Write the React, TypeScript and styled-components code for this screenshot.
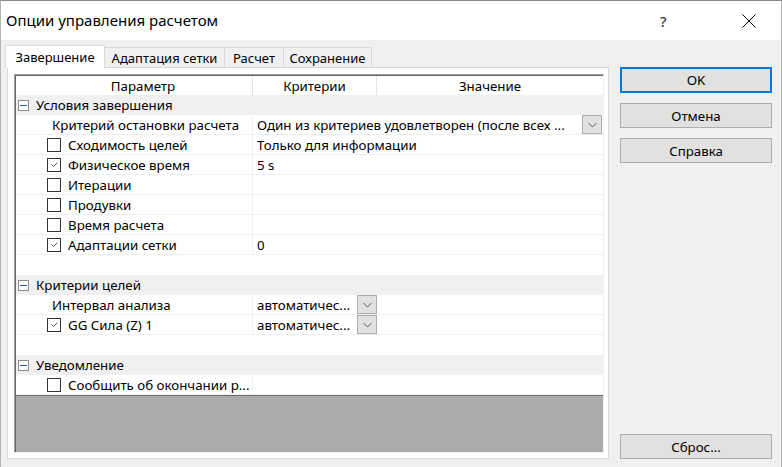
import React from "react";
import styled, { createGlobalStyle } from "styled-components";

const GlobalStyle = createGlobalStyle`
  html, body {
    margin: 0;
    padding: 0;
    background: #f0f0f0;
  }
  * {
    box-sizing: border-box;
  }
`;

const gridFont = `"Noto Sans", "Open Sans", sans-serif`;
const uiFont = `"Noto Sans", "Open Sans", sans-serif`;

type Row =
  | { kind: "group"; label: string }
  | { kind: "empty" }
  | {
      kind: "item";
      label: string;
      check?: boolean;
      checked?: boolean;
      value?: string;
      wideDrop?: boolean;
      shortDrop?: boolean;
    };

const rows: Row[] = [
  { kind: "group", label: "Условия завершения" },
  {
    kind: "item",
    label: "Критерий остановки расчета",
    value: "Один из критериев удовлетворен (после всех ...",
    wideDrop: true,
  },
  { kind: "item", label: "Сходимость целей", check: true, value: "Только для информации" },
  { kind: "item", label: "Физическое время", check: true, checked: true, value: "5 s" },
  { kind: "item", label: "Итерации", check: true },
  { kind: "item", label: "Продувки", check: true },
  { kind: "item", label: "Время расчета", check: true },
  { kind: "item", label: "Адаптации сетки", check: true, checked: true, value: "0" },
  { kind: "empty" },
  { kind: "group", label: "Критерии целей" },
  { kind: "item", label: "Интервал анализа", value: "автоматичес...", shortDrop: true },
  { kind: "item", label: "GG Сила (Z) 1", check: true, checked: true, value: "автоматичес...", shortDrop: true },
  { kind: "empty" },
  { kind: "group", label: "Уведомление" },
  { kind: "item", label: "Сообщить об окончании р...", check: true },
];

const tabs = [
  { label: "Завершение", width: 100 },
  { label: "Адаптация сетки", width: 121 },
  { label: "Расчет", width: 60 },
  { label: "Сохранение", width: 89 },
];

export default function App() {
  return (
    <>
      <GlobalStyle />
      <Window>
        <TitleBar>
          <TitleText>Опции управления расчетом</TitleText>
          <HelpMark>?</HelpMark>
          <CloseIcon width="16" height="16" viewBox="0 0 16 16">
            <path d="M1.5 1.5 L14.5 14.5 M14.5 1.5 L1.5 14.5" stroke="#000" strokeWidth="1" fill="none" />
          </CloseIcon>
        </TitleBar>
        <Body>
          <LeftColumn>
            <TabStrip>
              {tabs.map((t, i) => (
                <Tab key={t.label} $active={i === 0} $width={t.width}>
                  {t.label}
                </Tab>
              ))}
            </TabStrip>
            <Panel>
              <Grid>
                <HeaderRow>
                  <HeaderCell $width={237} $shift={18}>
                    Параметр
                  </HeaderCell>
                  <HeaderCell $width={124}>Критерии</HeaderCell>
                  <HeaderCell $last>Значение</HeaderCell>
                </HeaderRow>
                {rows.map((r, i) => {
                  if (r.kind === "group") {
                    return (
                      <GroupRow key={i}>
                        <Collapse>
                          <span />
                        </Collapse>
                        {r.label}
                      </GroupRow>
                    );
                  }
                  if (r.kind === "empty") return <EmptyRow key={i} />;
                  return (
                    <DataRow key={i}>
                      <ParamCell $indent={r.check ? 31 : 36}>
                        {r.check && (
                          <CheckBox>
                            {r.checked && (
                              <svg width="11" height="11" viewBox="0 0 11 11">
                                <path
                                  d="M2.5 5.5 L4.5 7.5 L8.5 3.5"
                                  stroke="#555"
                                  strokeWidth="1"
                                  fill="none"
                                />
                              </svg>
                            )}
                          </CheckBox>
                        )}
                        <Ellipsis>{r.label}</Ellipsis>
                      </ParamCell>
                      {r.shortDrop ? (
                        <ValueCell>
                          <ShortCombo>
                            <Ellipsis>{r.value}</Ellipsis>
                            <DropButton>
                              <Chevron />
                            </DropButton>
                          </ShortCombo>
                        </ValueCell>
                      ) : (
                        <ValueCell>
                          <Ellipsis>{r.value}</Ellipsis>
                          {r.wideDrop && (
                            <DropButton $push>
                              <Chevron />
                            </DropButton>
                          )}
                        </ValueCell>
                      )}
                    </DataRow>
                  );
                })}
                <GridFill />
              </Grid>
            </Panel>
          </LeftColumn>
          <ButtonColumn>
            <DialogButton $default>OK</DialogButton>
            <DialogButton>Отмена</DialogButton>
            <DialogButton>Справка</DialogButton>
            <Spacer />
            <DialogButton>Сброс...</DialogButton>
          </ButtonColumn>
        </Body>
      </Window>
    </>
  );
}

function Chevron() {
  return (
    <svg width="9" height="6" viewBox="0 0 9 6">
      <path d="M0.5 1 L4.5 5 L8.5 1" stroke="#606060" strokeWidth="1" fill="none" />
    </svg>
  );
}

const Window = styled.div`
  width: 782px;
  height: 467px;
  display: flex;
  flex-direction: column;
  background: #f0f0f0;
  border-top: 1px solid #8a8a8a;
  border-left: 1px solid #b4b4b4;
  border-right: 1px solid #b4b4b4;
  overflow: hidden;
`;

const TitleBar = styled.div`
  height: 39px;
  flex: 0 0 39px;
  background: #fff;
  display: flex;
  align-items: center;
  padding-left: 5px;
  font-family: ${uiFont};
  font-size: 15px;
  color: #000;
`;

const TitleText = styled.div`
  flex: 1;
  padding-bottom: 1px;
`;

const HelpMark = styled.div`
  width: 18px;
  margin-right: 63px;
  color: #222;
`;

const CloseIcon = styled.svg`
  margin-right: 24px;
`;

const Body = styled.div`
  flex: 1;
  display: flex;
  padding: 5px 9px 8px 4px;
  gap: 11px;
  min-height: 0;
`;

const LeftColumn = styled.div`
  width: 604px;
  display: flex;
  flex-direction: column;
`;

const TabStrip = styled.div`
  height: 23px;
  display: flex;
  align-items: flex-end;
  position: relative;
  z-index: 1;
`;

const Tab = styled.div<{ $active?: boolean; $width: number }>`
  width: ${(p) => p.$width}px;
  flex: 0 0 ${(p) => p.$width}px;
  height: ${(p) => (p.$active ? 23 : 21)}px;
  margin-left: -1px;
  display: flex;
  align-items: center;
  justify-content: center;
  font-family: ${uiFont};
  font-size: 13px;
  color: #000;
  background: ${(p) => (p.$active ? "#fff" : "#f0f0f0")};
  border: 1px solid #d9d9d9;
  border-bottom: ${(p) => (p.$active ? "none" : "1px solid #d9d9d9")};
  position: relative;
  z-index: ${(p) => (p.$active ? 2 : 0)};
  &:first-child {
    margin-left: 0;
  }
`;

const Panel = styled.div`
  flex: 1;
  margin: -1px 0 0 2px;
  background: #fff;
  border: 1px solid #d9d9d9;
  padding: 6px 4px 5px 6px;
  display: flex;
  min-height: 0;
`;

const Grid = styled.div`
  flex: 1;
  display: flex;
  flex-direction: column;
  border: 1px solid;
  border-color: #a0a0a0 #f0f0f0 #f0f0f0 #a0a0a0;
  box-shadow: inset 1px 1px 0 #696969;
  padding: 1px 0 0 1px;
  font-family: ${gridFont};
  font-size: 13.3px;
  color: #000;
  background: #fff;
`;

const HeaderRow = styled.div`
  height: 19px;
  flex: 0 0 19px;
  display: flex;
`;

const HeaderCell = styled.div<{ $width?: number; $shift?: number; $last?: boolean }>`
  ${(p) => (p.$width ? `width: ${p.$width}px; flex: 0 0 ${p.$width}px;` : "flex: 1;")}
  padding-left: ${(p) => p.$shift ?? 0}px;
  display: flex;
  align-items: center;
  justify-content: center;
  border-right: ${(p) => (p.$last ? "none" : "1px solid #e5e5e5")};
`;

const GroupRow = styled.div`
  height: 20px;
  flex: 0 0 20px;
  background: #f0f0f0;
  display: flex;
  align-items: center;
  padding-left: 2px;
  white-space: nowrap;
`;

const Collapse = styled.div`
  width: 11px;
  height: 11px;
  border: 1px solid #8c8c8c;
  background: #fff;
  margin-right: 7px;
  display: flex;
  align-items: center;
  justify-content: center;
  span {
    width: 7px;
    height: 1px;
    background: #2f4f9f;
  }
`;

const EmptyRow = styled.div`
  height: 20px;
  flex: 0 0 20px;
`;

const DataRow = styled.div`
  height: 20px;
  flex: 0 0 20px;
  display: flex;
  border-bottom: 1px solid #f0f0f0;
`;

const ParamCell = styled.div<{ $indent: number }>`
  width: 237px;
  flex: 0 0 237px;
  display: flex;
  align-items: center;
  padding-left: ${(p) => p.$indent}px;
  padding-right: 1px;
  border-right: 1px solid #f0f0f0;
  overflow: hidden;
`;

const CheckBox = styled.div`
  width: 14px;
  height: 14px;
  flex: 0 0 14px;
  border: 1px solid #333;
  margin-right: 7px;
  display: flex;
  align-items: center;
  justify-content: center;
`;

const Ellipsis = styled.span`
  white-space: nowrap;
  overflow: hidden;
  text-overflow: clip;
  flex: 0 1 auto;
  min-width: 0;
`;

const ValueCell = styled.div`
  flex: 1;
  display: flex;
  align-items: center;
  padding-left: 4px;
  min-width: 0;
`;

const ShortCombo = styled.div`
  width: 120px;
  display: flex;
  align-items: center;
  justify-content: space-between;
`;

const DropButton = styled.div<{ $push?: boolean }>`
  width: 20px;
  height: 19px;
  flex: 0 0 20px;
  margin-left: ${(p) => (p.$push ? "auto" : "4px")};
  margin-right: ${(p) => (p.$push ? 1 : 0)}px;
  background: #e1e1e1;
  border: 1px solid #adadad;
  display: flex;
  align-items: center;
  justify-content: center;
`;

const GridFill = styled.div`
  flex: 1;
  background: #ababab;
  border-top: 1px solid #6e6e6e;
`;

const ButtonColumn = styled.div`
  width: 152px;
  display: flex;
  flex-direction: column;
  gap: 10px;
  padding-top: 22px;
`;

const Spacer = styled.div`
  flex: 1;
`;

const DialogButton = styled.div<{ $default?: boolean }>`
  height: ${(p) => (p.$default ? 26 : 25)}px;
  background: #e1e1e1;
  border: ${(p) => (p.$default ? "2px solid #0078d7" : "1px solid #adadad")};
  display: flex;
  align-items: center;
  justify-content: center;
  font-family: ${gridFont};
  font-size: 13.3px;
  color: #000;
`;
